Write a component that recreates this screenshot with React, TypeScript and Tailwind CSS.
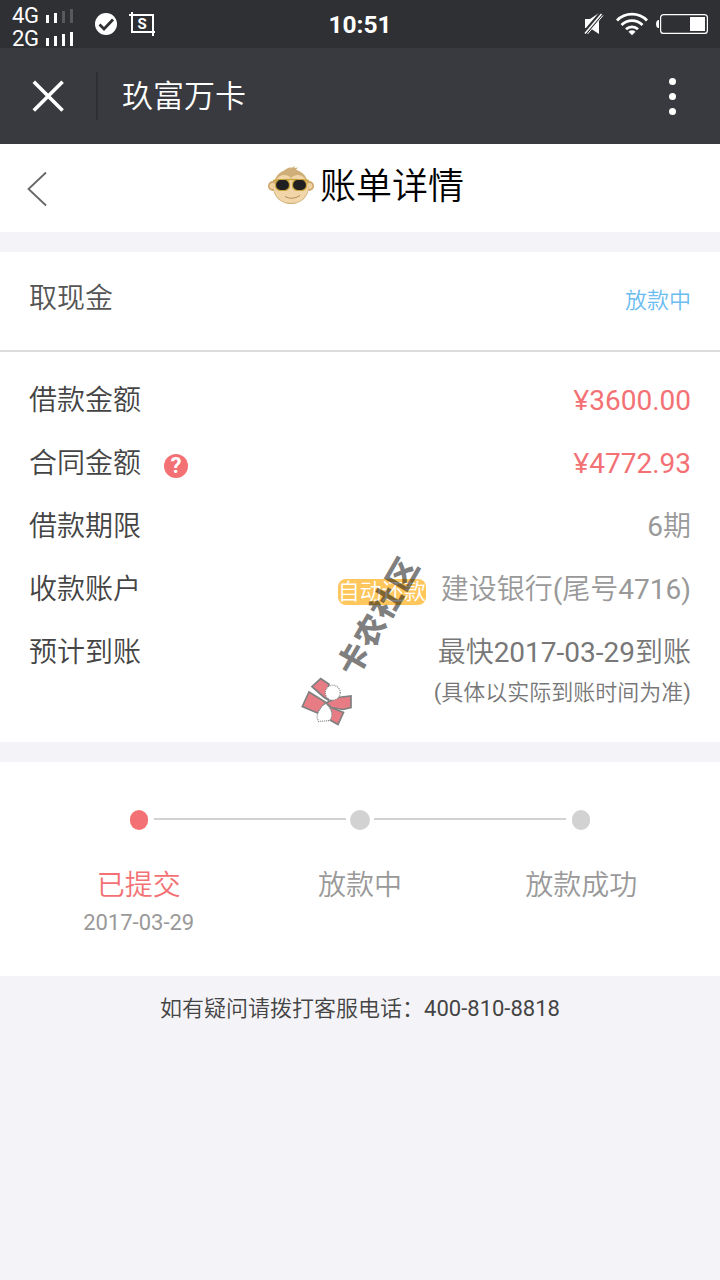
import type { ReactNode } from 'react';
import clsx from 'clsx';

interface DetailRowProps {
  label: string;
  help?: boolean;
  children: ReactNode;
}

interface Step {
  title: string;
  date?: string;
  active?: boolean;
}

const steps: Step[] = [
  { title: '已提交', date: '2017-03-29', active: true },
  { title: '放款中' },
  { title: '放款成功' },
];

function Signal({ name, weak }: { name: string; weak?: boolean }) {
  const dim = weak ? '#58595c' : '#fff';
  return (
    <div className="flex h-[23px] items-center gap-[6px]">
      <span className="w-7 text-[22px] leading-[23px] tracking-[-0.3px]">{name}</span>
      <svg width="28" height="14" className="mt-[1px]">
        <rect x="0" y="6" width="3" height="8" fill="#fff" />
        <rect x="8" y="4" width="3" height="10" fill="#fff" />
        <rect x="16" y="2" width="3" height="12" fill={dim} />
        <rect x="24" y="0" width="3" height="14" fill={dim} />
      </svg>
    </div>
  );
}

function StatusBar() {
  return (
    <div className="grid h-12 grid-cols-3 items-center bg-[#2f3033] font-['Roboto',sans-serif] text-white">
      <div className="flex h-12 items-center pl-3">
        <div className="pt-[6px]">
          <Signal name="4G" weak />
          <Signal name="2G" />
        </div>
        <svg width="22" height="22" viewBox="0 0 22 22" className="ml-[21px]">
          <circle cx="11" cy="11" r="11" fill="#fff" />
          <path d="M4.5 11.5l4.500 4.500 9-9.500" fill="none" stroke="#2f3033" strokeWidth="2.800" />
        </svg>
        <svg width="26" height="24" viewBox="0 0 26 24" className="ml-3">
          <path d="M0 3h24v21M3 0v20h23" fill="none" stroke="#fff" strokeWidth="2" />
          <text x="13" y="17" textAnchor="middle" fontSize="15" fontWeight="700" fill="#fff">
            S
          </text>
        </svg>
      </div>
      <div className="pt-[3px] text-center text-[24.500px] leading-none font-bold">10:51</div>
      <div className="flex items-center justify-end pr-3">
        <svg width="20" height="22" viewBox="0 0 20 22">
          <path d="M1 6h5l9-6v21l-9-6H1z" fill="#fff" />
          <path d="M0 21L18 0" stroke="#2f3033" strokeWidth="5" />
          <path d="M1 20.500L17.500 1" stroke="#fff" strokeWidth="1.500" />
          <path d="M3.500 21L19 2.500" stroke="#fff" strokeWidth="1" />
        </svg>
        <svg width="32" height="24" viewBox="0 0 32 24" className="ml-3" fill="none" stroke="#fff" strokeWidth="2.800">
          <path d="M1 8.500a21 21 0 0 1 30 0" />
          <path d="M5.500 13a14.800 14.800 0 0 1 21 0" />
          <path d="M10 17.300a8.500 8.500 0 0 1 12 0" />
          <path d="M12.500 19.800a5 5 0 0 1 7 0L16 23.300z" fill="#fff" stroke="none" />
        </svg>
        <svg width="52" height="20" viewBox="0 0 52 20" className="ml-2">
          <path d="M3 6H2q-2 1-2 4t2 4h1z" fill="#fff" />
          <rect x="4.600" y="0.600" width="46.800" height="18.800" rx="3" fill="none" stroke="#fff" strokeWidth="1.200" />
          <rect x="34" y="3" width="15" height="14" fill="#fff" />
        </svg>
      </div>
    </div>
  );
}

function NavBar() {
  return (
    <div className="flex h-24 items-center bg-[#393a3f] text-white">
      <svg width="32" height="32" viewBox="0 0 32 32" className="ml-8">
        <path d="M1.800 1.800l28.800 28.800M30.600 1.800L1.800 30.600" stroke="#fff" strokeWidth="3.600" />
      </svg>
      <div className="ml-8 h-12 w-[2px] bg-[#2e2f33]" />
      <span className="mt-[3px] ml-6 flex-1 text-[31px]">玖富万卡</span>
      <div className="mr-11 flex flex-col gap-2">
        <i className="size-[7px] rounded-full bg-white" />
        <i className="size-[7px] rounded-full bg-white" />
        <i className="size-[7px] rounded-full bg-white" />
      </div>
    </div>
  );
}

function Monkey() {
  return (
    <svg width="46" height="39" viewBox="0 0 46 39">
      <circle cx="5" cy="20" r="5" fill="#cfa76c" />
      <circle cx="41" cy="20" r="5" fill="#cfa76c" />
      <circle cx="4.600" cy="20" r="3" fill="#f0d3a2" />
      <circle cx="41.400" cy="20" r="3" fill="#f0d3a2" />
      <path d="M15 6C17 3 20 2 23 1l-1 1.500 5-2.500-1 2 4-.5-2 2 3 2z" fill="#cfae78" />
      <path d="M23 3.500C33 3.500 39 9 40 18c3 12-7 20-17 20S3 30 6 18C7 9 13 3.500 23 3.500z" fill="#cfae78" />
      <path d="M23 12c4-5 13-4 15 3 3 4 3 8 1 12-3 7-9 10-16 10S10 34 7 27c-2-4-2-8 1-12 2-7 11-8 15-3z" fill="#f0d6a8" />
      <path d="M5 14.500q18-2 36 0" fill="none" stroke="#c9a43a" strokeWidth="1.400" />
      <rect x="7.500" y="13.500" width="14" height="11" rx="5" fill="#202022" stroke="#c9a43a" strokeWidth="1.200" />
      <rect x="24.500" y="13.500" width="14" height="11" rx="5" fill="#202022" stroke="#c9a43a" strokeWidth="1.200" />
      <path d="M17 30.500q7 4 15-1" fill="none" stroke="#b98f58" strokeWidth="1" />
    </svg>
  );
}

function DetailRow({ label, help, children }: DetailRowProps) {
  return (
    <div className="flex h-[63px] items-center text-[28px] text-[#999]">
      <span className="mt-[2px] text-[#444]">{label}</span>
      {help && (
        <span className="mt-[7px] ml-[23px] flex size-6 items-center justify-center rounded-full bg-[#f37174] text-[22px] leading-none font-bold text-white">
          ?
        </span>
      )}
      <div className="mt-[2px] ml-auto flex items-center">{children}</div>
    </div>
  );
}

function Amount({ value }: { value: string }) {
  return (
    <span className="text-[#f37174]">
      <span className="font-['Noto_Sans'] leading-none">¥</span>
      {value}
    </span>
  );
}

function Watermark() {
  return (
    <div className="pointer-events-none absolute inset-0">
      <svg width="54" height="50" viewBox="0 0 54 50" className="absolute top-[424px] left-[300px]" stroke="#808080" strokeWidth="1.700">
        <path d="M12 10.700l8.700-8 8.300 5.500-2 9 1.500 7-4.500-3z" fill="#e87c85" />
        <path d="M9 16l17 10.500-8.500 10.500L2.300 30.500z" fill="#e87c85" />
        <path d="M26 27l11.500-5.500 13.500-1.500v11.500l-8 2-12-2z" fill="#e87c85" />
        <path d="M26 27l5 4.500 12.500 5L38 48.500l-8-4.500 1.500-8z" fill="#e87c85" />
        <circle cx="32.700" cy="16.700" r="7.500" fill="#fff" strokeWidth="1.200" strokeDasharray="1 1" />
        <path d="M25.500 27.500c7 5 8 13 4 17l-11 1-1.500-4c0-5 4-11 8.500-14z" fill="#fff" strokeWidth="1.200" strokeDasharray="1 1" />
      </svg>
      <span className="absolute top-[345px] left-[311px] w-[132px] -rotate-60 text-center font-['Noto_Sans_CJK_SC_Black','Noto_Sans_CJK_SC',sans-serif] text-[31px] leading-[36px] font-black tracking-[1.700px] whitespace-nowrap text-black/50">
        卡农社区
      </span>
    </div>
  );
}

function Progress() {
  return (
    <section className="mt-5 h-[214px] bg-white pt-12">
      <div className="flex items-center px-[130px]">
        <i className="h-5 w-[18px] rounded-[9px] bg-[#f37174]" />
        <i className="-mt-[2px] mr-1 ml-[6px] h-[2px] flex-1 bg-[#d2d2d2]" />
        <i className="size-5 rounded-full bg-[#d2d2d2]" />
        <i className="-mt-[2px] mr-[6px] ml-1 h-[2px] flex-1 bg-[#d2d2d2]" />
        <i className="h-5 w-[18px] rounded-[9px] bg-[#d2d2d2]" />
      </div>
      <div className="grid grid-cols-3 px-7 pt-9 text-center text-[#999]">
        {steps.map((step) => (
          <div key={step.title}>
            <div className={clsx('text-[28px] leading-10', step.active && 'text-[#f37174]')}>{step.title}</div>
            {step.date && <div className="pt-[1px] text-[22px] leading-8">{step.date}</div>}
          </div>
        ))}
      </div>
    </section>
  );
}

export default function App() {
  return (
    <div className="h-[1280px] w-[720px] overflow-hidden bg-[#f4f3f8] font-['Roboto','Noto_Sans_CJK_SC_DemiLight','Noto_Sans_CJK_SC',sans-serif]">
      <StatusBar />
      <NavBar />
      <header className="flex h-22 items-center bg-white">
        <svg width="20" height="36" viewBox="0 0 20 36" className="mt-[2px] ml-[27px]">
          <path d="M19 1.500L1.500 18 19 34.500" fill="none" stroke="#666" strokeWidth="1.800" />
        </svg>
        <div className="-mt-[6px] ml-[221px] flex items-center gap-[6px]">
          <Monkey />
          <h1 className="pt-1 text-[36px] leading-none text-black">账单详情</h1>
        </div>
      </header>

      <main className="relative mt-5">
        <section className="flex h-[100px] items-center justify-between border-b-2 border-[#dcdcdc] bg-white px-[29px]">
          <span className="-mt-1 text-[28px] text-[#555]">取现金</span>
          <span className="-mt-[1px] text-[22px] text-[#6bbcf0]">放款中</span>
        </section>
        <section className="h-[390px] bg-white px-[29px] pt-4">
          <DetailRow label="借款金额">
            <Amount value="3600.00" />
          </DetailRow>
          <DetailRow label="合同金额" help>
            <Amount value="4772.93" />
          </DetailRow>
          <DetailRow label="借款期限">6期</DetailRow>
          <DetailRow label="收款账户">
            <span className="mt-1 mr-[15px] h-[26px] rounded-lg bg-[#ffc65c] text-[22px] leading-[26px] text-white">自动还款</span>
            建设银行(尾号4716)
          </DetailRow>
          <DetailRow label="预计到账">
            <span className="text-[#777]">最快2017-03-29到账</span>
          </DetailRow>
          <p className="-mt-[6px] text-right text-[22px] leading-8 text-[#777]">(具体以实际到账时间为准)</p>
        </section>
        <Watermark />
      </main>

      <Progress />
      <p className="pt-[17px] text-center text-[22px] leading-8 text-[#444]">如有疑问请拨打客服电话：400-810-8818</p>
    </div>
  );
}
